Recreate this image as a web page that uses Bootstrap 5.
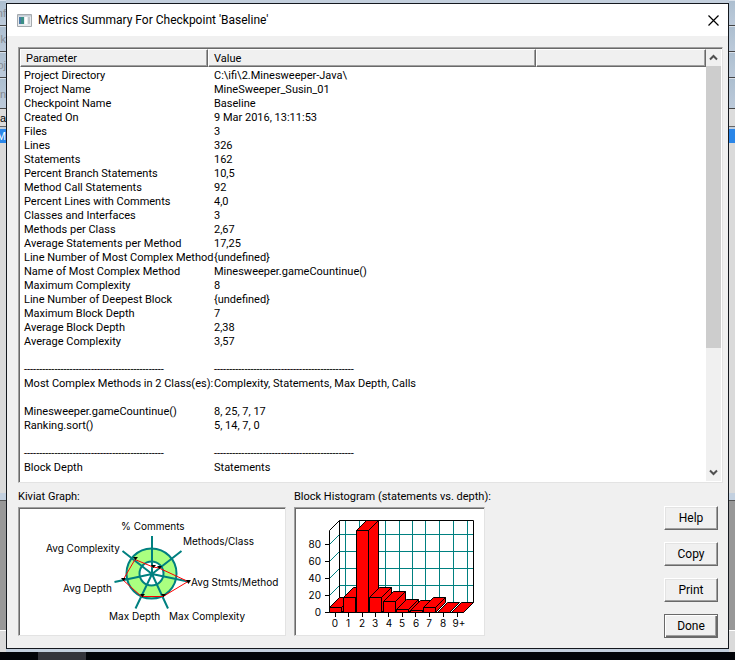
<!DOCTYPE html>
<html lang="en">
<head>
<meta charset="utf-8">
<meta name="viewport" content="width=device-width, initial-scale=1">
<title>Metrics Summary For Checkpoint 'Baseline'</title>
<link href="https://cdn.jsdelivr.net/npm/bootstrap@5.3.0/dist/css/bootstrap.min.css" rel="stylesheet">
<script src="https://cdn.jsdelivr.net/npm/bootstrap@5.3.0/dist/js/bootstrap.bundle.min.js" defer></script>
<style>
body{background:#dcdcdc;color:#000;font:11px/14px Roboto,"Liberation Sans",sans-serif}
.desktop{background:#c3cfdd}
.edge{width:6px;color:#858b93;font:11px/14px "Liberation Sans",Arial,sans-serif}
.edge>div{display:flex;justify-content:flex-end;align-items:center;white-space:nowrap}
.edge .tool{background:linear-gradient(#adbfd0,#bccada);border-top:1px solid #d8e0ea;border-bottom:1px solid #444;height:26px}
.edge .tool-last{height:31px}
.edge .head{height:18px;background:#dcdcdc;color:#000;border-bottom:1px solid #666}
.edge .pick{height:14px;margin-top:2px;background:#2a86e8;color:#fff}
.edge .pane,.edge .foot{background:#dadada}
.edge .band{height:8px;background:#c3d0df;border-bottom:1px solid #555}
.edge .work{background:#989898;height:130px;border-bottom:1px solid #fff}
.edge .foot{height:21px}
.dialog-win{background:#f0f0f0;border:1px solid #14181e;margin:3px 0;min-width:0}
.titlebar{height:32px;font:12px/16px Roboto,"Noto Sans",sans-serif}
.app-icon{margin:0 6px 0 2px}
.close-btn{width:30px;height:31px}
.win-body{padding:11px 5px 10px 11px}
.sunken{background:#fff;border:1px solid;border-color:#a0a0a0 #e3e3e3 #e3e3e3 #a0a0a0;box-shadow:inset 1px 1px #696969;padding:1px}
.metrics{table-layout:fixed;border-collapse:separate;border-spacing:0}
.metrics th{font-weight:400;height:18px;line-height:14px;padding:1px 5px 0;background:#f0f0f0;border:1px solid;border-color:#fff #696969 #696969 #fff;box-shadow:inset -1px -1px #a0a0a0}
.metrics td{padding:0 4px;height:14px;white-space:nowrap}
.metrics td+td{padding-left:6px}
.metrics tbody tr:first-child td{height:16px;padding-top:2px}
.c1{width:188px}.c2{width:328px}
.scroller{width:15px;background:#f0f0f0}
.scroller button{height:17px}
.thumb{height:282px;background:#cdcdcd}
.list-foot{height:6px}
.lower{gap:8px;padding-top:5px}
.caption{height:19px;padding-top:2px;white-space:nowrap}
.hist-col{width:191px}
.chart-box svg{display:block}
svg text{font:10px Inter,"Liberation Sans",sans-serif;fill:#000;stroke:none}
.side-btns{width:54px;gap:12px;margin:18px 5px 0 0}
.push{height:24px;background:#f0f0f0;border:1px solid;border-color:#fff #696969 #696969 #fff;box-shadow:inset -1px -1px #a0a0a0,inset 1px 1px #e3e3e3;padding:0;color:#000}
.push{font-size:12px}
.push-default{border-color:#696969;box-shadow:inset 1px 1px #fff,inset -1px -1px #696969,inset -2px -2px #a0a0a0}
.taskbar{height:8px;background:#020408}
.task{width:48px;margin-left:38px;background:#33343a}
</style>
</head>
<body>
<div class="desktop d-flex flex-column min-vh-100">
 <div class="d-flex flex-grow-1">
  <div class="edge flex-shrink-0 d-flex flex-column overflow-hidden">
   <div class="tool">nf</div><div class="tool">k</div><div class="tool">oj</div><div class="tool tool-last">n</div>
   <div class="head">a</div><div class="pick">M</div><div class="pane flex-grow-1"></div><div class="band"></div><div class="work"></div><div class="foot"></div>
  </div>
  <main class="dialog-win flex-grow-1">
   <header class="titlebar bg-white d-flex align-items-center ps-2">
    <svg class="app-icon" width="15" height="13"><path d="M.5.5h14v12H.5z" fill="#e8ebee" stroke="#a5aaae"/><path d="M1 1h13v1.500H1z" fill="#c4ccd4"/><path d="M2 3h5v7H2z" fill="#3b8f86"/><path d="M2 3h2v7H2z" fill="#4a78a8"/><path d="M8 3h2v7H8z" fill="#fff"/><path d="M11 3h2v7h-2z" fill="#c3c8cc"/></svg>
    <span>Metrics Summary For Checkpoint 'Baseline'</span>
    <button class="close-btn btn p-0 ms-auto border-0 d-flex align-items-center justify-content-center" aria-label="Close"><svg width="11" height="11" stroke="#000" stroke-width="1.2"><path d="M.5.5l10 10M10.500.5l-10 10"/></svg></button>
   </header>
   <div class="win-body">
    <div class="sunken d-flex">
     <div class="flex-grow-1">
      <table class="metrics w-100">
       <colgroup><col class="c1"><col class="c2"><col></colgroup>
       <thead><tr><th>Parameter</th><th>Value</th><th></th></tr></thead>
       <tbody>
        <tr><td>Project Directory</td><td>C:\ifi\2.Minesweeper-Java\</td></tr>
        <tr><td>Project Name</td><td>MineSweeper_Susin_01</td></tr>
        <tr><td>Checkpoint Name</td><td>Baseline</td></tr>
        <tr><td>Created On</td><td>9 Mar 2016, 13:11:53</td></tr>
        <tr><td>Files</td><td>3</td></tr>
        <tr><td>Lines</td><td>326</td></tr>
        <tr><td>Statements</td><td>162</td></tr>
        <tr><td>Percent Branch Statements</td><td>10,5</td></tr>
        <tr><td>Method Call Statements</td><td>92</td></tr>
        <tr><td>Percent Lines with Comments</td><td>4,0</td></tr>
        <tr><td>Classes and Interfaces</td><td>3</td></tr>
        <tr><td>Methods per Class</td><td>2,67</td></tr>
        <tr><td>Average Statements per Method</td><td>17,25</td></tr>
        <tr><td>Line Number of Most Complex Method</td><td>{undefined}</td></tr>
        <tr><td>Name of Most Complex Method</td><td>Minesweeper.gameCountinue()</td></tr>
        <tr><td>Maximum Complexity</td><td>8</td></tr>
        <tr><td>Line Number of Deepest Block</td><td>{undefined}</td></tr>
        <tr><td>Maximum Block Depth</td><td>7</td></tr>
        <tr><td>Average Block Depth</td><td>2,38</td></tr>
        <tr><td>Average Complexity</td><td>3,57</td></tr>
        <tr><td></td><td></td></tr>
        <tr><td>----------------------------------------------</td><td>----------------------------------------------</td></tr>
        <tr><td>Most Complex Methods in 2 Class(es):</td><td>Complexity, Statements, Max Depth, Calls</td></tr>
        <tr><td></td><td></td></tr>
        <tr><td>Minesweeper.gameCountinue()</td><td>8, 25, 7, 17</td></tr>
        <tr><td>Ranking.sort()</td><td>5, 14, 7, 0</td></tr>
        <tr><td></td><td></td></tr>
        <tr><td>----------------------------------------------</td><td>----------------------------------------------</td></tr>
        <tr><td>Block Depth</td><td>Statements</td></tr>
       </tbody>
      </table>
      <div class="list-foot"></div>
     </div>
     <div class="scroller flex-shrink-0 d-flex flex-column">
      <button class="btn p-0 border-0 d-flex align-items-center justify-content-center" aria-label="Scroll up"><svg width="9" height="7" fill="none" stroke="#505050" stroke-width="2"><path d="M1 5.500l3.500-3.500L8 5.500"/></svg></button>
      <div class="thumb"></div>
      <button class="btn p-0 border-0 mt-auto d-flex align-items-center justify-content-center" aria-label="Scroll down"><svg width="9" height="7" fill="none" stroke="#505050" stroke-width="2"><path d="M1 1.500l3.500 3.500L8 1.500"/></svg></button>
     </div>
    </div>
    <div class="lower d-flex">
     <section>
      <div class="caption">Kiviat Graph:</div>
      <div class="chart-box sunken">
       <svg width="264" height="125" viewBox="20 509 264 125" role="img" aria-label="Kiviat graph">
        <circle cx="151.500" cy="573.500" r="25" fill="#aaff80" stroke="#008080" stroke-width="2"/>
        <circle cx="151.500" cy="573.500" r="12" fill="#fff" stroke="#008080" stroke-width="2"/>
        <path d="M152 574V536M152 574L181.500 551M152 574L188 581.500M152 574L168 608.500M152 574L135.500 608.500M152 574L114.500 582M152 574L122.500 551" stroke="#008080" stroke-width="2"/>
        <path d="M153 567L159 568L188 581.500L163 596.500H141.500L123 580L135 559.500Z" fill="none" stroke="#f00"/>
        <path d="M151 565h5l-2.500 3zM157 566h5l-2.500 3zM186 580h5l-2.500 4zM161 594h5l-2.500 3zM140 594h5l-2.500 3zM121 578h5l-2.500 3zM133 557h5l-2.500 3z"/>
        <text x="121" y="530">% Comments</text><text x="183" y="545">Methods/Class</text>
        <text x="46" y="552">Avg Complexity</text><text x="191" y="586">Avg Stmts/Method</text>
        <text x="63" y="592">Avg Depth</text><text x="109" y="620">Max Depth</text><text x="169" y="620">Max Complexity</text>
       </svg>
      </div>
     </section>
     <section class="hist-col">
      <div class="caption">Block Histogram (statements vs. depth):</div>
      <div class="chart-box sunken">
       <svg width="187" height="125" viewBox="296 509 187 125" role="img" aria-label="Block histogram">
        <path fill="none" stroke="#008080" d="M339.500 534.500H473M339.500 551.500H473M339.500 568.500H473M339.500 585.500H473M345.500 520V602M359.500 520V602M372.500 520V602M385.500 520V602M399.500 520V602M412.500 520V602M425.500 520V602M439.500 520V602M453.500 520V602M467.500 520V602M329.500 544.500l10-10M329.500 561.500l10-10M329.500 578.500l10-10M329.500 595.500l10-10"/>
        <path fill="none" stroke="#000" d="M339.500 602.500V520.500H473.500V602.500l-10 10H329.500V530.500l10-10M325 544.500h4M325 561.500h4M325 578.500h4M325 595.500h4M325 612.500h4M335.500 612v5M348.500 612v5M362.500 612v5M375.500 612v5M388.500 612v5M402.500 612v5M415.500 612v5M429.500 612v5M443.500 612v5M457.500 612v5"/>
        <g fill="#f00" stroke="#000" stroke-linejoin="round">
         <path d="M329.500 607.500h12v5h-12zM329.500 607.500l10-10h12l-10 10zM341.500 607.500l10-10v5l-10 10z"/>
         <path d="M343.500 597.500h12v15h-12zM343.500 597.500l10-10h12l-10 10zM355.500 597.500l10-10v15l-10 10z"/>
         <path d="M356.500 530.500h12v82h-12zM356.500 530.500l10-10h12l-10 10zM368.500 530.500l10-10v82l-10 10z"/>
         <path d="M369.500 597.500h12v15h-12zM369.500 597.500l10-10h12l-10 10zM381.500 597.500l10-10v15l-10 10z"/>
         <path d="M383.500 601.500h12v11h-12zM383.500 601.500l10-10h12l-10 10zM395.500 601.500l10-10v11l-10 10z"/>
         <path d="M396.500 609.500h12v3h-12zM396.500 609.500l10-10h12l-10 10zM408.500 609.500l10-10v3l-10 10z"/>
         <path d="M410.500 610.500h12v2h-12zM410.500 610.500l10-10h12l-10 10zM422.500 610.500l10-10v2l-10 10z"/>
         <path d="M423.500 607.500h12v5h-12zM423.500 607.500l10-10h12l-10 10zM435.500 607.500l10-10v5l-10 10z"/>
         <path d="M437.500 612.500l10-10h12l-10 10zM451.500 612.500l10-10h12l-10 10z"/>
        </g>
        <g text-anchor="end"><text x="321" y="548">80</text><text x="321" y="565">60</text><text x="321" y="582">40</text><text x="321" y="599">20</text><text x="321" y="616">0</text></g>
        <g text-anchor="middle"><text x="335" y="627">0</text><text x="348" y="627">1</text><text x="362" y="627">2</text><text x="375" y="627">3</text><text x="389" y="627">4</text><text x="402" y="627">5</text><text x="416" y="627">6</text><text x="429" y="627">7</text><text x="443" y="627">8</text><text x="459" y="627">9+</text></g>
       </svg>
      </div>
     </section>
     <div class="side-btns d-flex flex-column ms-auto">
      <button class="push">Help</button><button class="push">Copy</button><button class="push">Print</button><button class="push push-default">Done</button>
     </div>
    </div>
   </div>
  </main>
  <div class="edge flex-shrink-0 d-flex flex-column overflow-hidden">
   <div class="tool"></div><div class="tool"></div><div class="tool"></div><div class="tool tool-last"></div>
   <div class="head"></div><div class="pick"></div><div class="pane flex-grow-1"></div><div class="band"></div><div class="work"></div><div class="foot"></div>
  </div>
 </div>
 <footer class="taskbar d-flex"><div class="task"></div></footer>
</div>
</body>
</html>
